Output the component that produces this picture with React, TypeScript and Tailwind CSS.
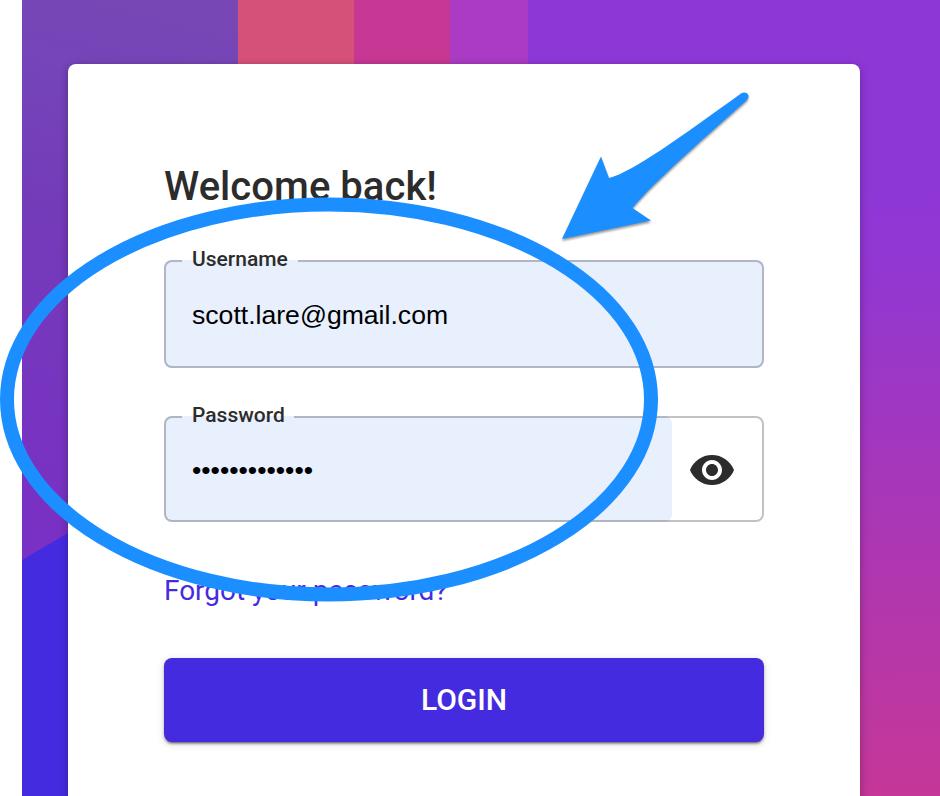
import { useState } from "react";

function Backdrop() {
  return (
    <svg className="absolute inset-0" width="940" height="796" viewBox="0 0 940 796" aria-hidden="true">
      <defs>
        <linearGradient id="violet" gradientUnits="userSpaceOnUse" x1="160" y1="0" x2="22" y2="530">
          <stop offset="0" stopColor="#7747b5" />
          <stop offset="0.15" stopColor="#7545b9" />
          <stop offset="0.42" stopColor="#743bb9" />
          <stop offset="1" stopColor="#7930c4" />
        </linearGradient>
        <linearGradient id="dusk" gradientUnits="userSpaceOnUse" x1="890" y1="190" x2="900" y2="796">
          <stop offset="0" stopColor="#8e37d7" />
          <stop offset="0.16" stopColor="#9337d0" />
          <stop offset="0.5" stopColor="#a837b8" />
          <stop offset="1" stopColor="#c53798" />
        </linearGradient>
      </defs>
      <rect x="22" width="216" height="796" fill="url(#violet)" />
      <path d="M22 560 L68 533 L238 433 V796 H22Z" fill="#452be0" />
      <rect x="238" width="116" height="100" fill="#d5517a" />
      <rect x="354" width="96" height="100" fill="#c73895" />
      <rect x="450" width="78" height="100" fill="#ab3bc4" />
      <rect x="528" width="412" height="796" fill="url(#dusk)" />
    </svg>
  );
}

function Outline({ notch, color }: { notch: string; color: string }) {
  return (
    <div className="pointer-events-none absolute inset-0 flex">
      <div className={`w-[18px] rounded-l-lg border-2 border-r-0 ${color}`} />
      <div className={`border-b-2 ${color} ${notch}`} />
      <div className={`flex-1 rounded-r-lg border-2 border-l-0 ${color}`} />
    </div>
  );
}

function Annotations() {
  return (
    <svg className="pointer-events-none absolute inset-0" width="940" height="796" viewBox="0 0 940 796" aria-hidden="true">
      <ellipse cx="329" cy="399.5" rx="322" ry="195" fill="none" stroke="#1b8fff" strokeWidth="14" />
      <path
        className="drop-shadow-[0_2px_1px_rgba(0,0,0,0.4)]"
        d="M562 239 L601 156.5 L609 178 C633 172 682 136 741 93.5 C745 90.5 751 94 747.5 99 L746 101 C714 129 652 184 632.5 208 L651 220.5Z"
        fill="#1b8fff"
      />
    </svg>
  );
}

const inputClass =
  "block h-full min-w-0 rounded-lg bg-[#e8effd] pl-7 pt-[3px] text-[26.6px] text-black outline-none font-['Liberation_Sans',Arial,sans-serif]";
const labelClass = "absolute left-7 top-[-13px] text-[21px] leading-6 font-medium text-[#2c2c2c]";

export default function App() {
  const [username, setUsername] = useState("scott.lare@gmail.com");
  const [password, setPassword] = useState("correcthorse1");
  const [visible, setVisible] = useState(false);

  return (
    <main className="relative h-[796px] w-[940px] overflow-hidden bg-white pt-16 pl-[68px] font-[Roboto,sans-serif]">
      <Backdrop />
      <section className="relative h-[800px] w-[792px] rounded-lg bg-white px-24 pt-[99px] shadow-[0_2px_8px_rgba(0,0,0,0.3)]">
        <h1 className="h-[97px] text-[40px] leading-[48px] font-medium tracking-[0.04px] whitespace-nowrap text-[#2c2c2c]">
          Welcome back!
        </h1>
        <form onSubmit={(e) => e.preventDefault()}>
          <div className="relative h-[108px]">
            <input
              id="username"
              className={`${inputClass} w-full`}
              value={username}
              onChange={(e) => setUsername(e.target.value)}
            />
            <Outline notch="w-[116px]" color="border-[#b0b6c5]" />
            <label htmlFor="username" className={labelClass}>
              Username
            </label>
          </div>
          <div className="relative mt-12 flex h-[106px]">
            <input
              id="password"
              type={visible ? "text" : "password"}
              className={`${inputClass} w-[508px]`}
              value={password}
              onChange={(e) => setPassword(e.target.value)}
            />
            <button
              type="button"
              aria-label="Toggle password"
              className="ml-4 flex h-full w-12 items-center pt-0.5"
              onClick={() => setVisible(!visible)}
            >
              <svg width="48" height="48" viewBox="0 0 24 24" fill="#2c2c2c">
                <path d="M12 4.5C7 4.5 2.73 7.61 1 12c1.73 4.39 6 7.5 11 7.5s9.27-3.11 11-7.5c-1.73-4.39-6-7.5-11-7.5zM12 17c-2.76 0-5-2.24-5-5s2.24-5 5-5 5 2.24 5 5-2.24 5-5 5zm0-8c-1.66 0-3 1.34-3 3s1.34 3 3 3 3-1.34 3-3-1.34-3-3-3z" />
              </svg>
            </button>
            <Outline notch="w-[112px]" color="border-black/24" />
            <label htmlFor="password" className={labelClass}>
              Password
            </label>
          </div>
          <a
            href="#forgot"
            className="mt-[53px] block h-[83px] text-[28px] leading-8 tracking-[-0.03px] whitespace-nowrap text-[#452be0]"
          >
            Forgot your password?
          </a>
          <button className="block h-[84px] w-full rounded-lg bg-[#452be0] pb-0.5 text-[30px] font-medium text-white shadow-[0_3px_2px_-2px_rgba(0,0,0,0.4),0_2px_3px_rgba(0,0,0,0.28),0_2px_10px_rgba(0,0,0,0.12)]">
            LOGIN
          </button>
        </form>
      </section>
      <Annotations />
    </main>
  );
}
